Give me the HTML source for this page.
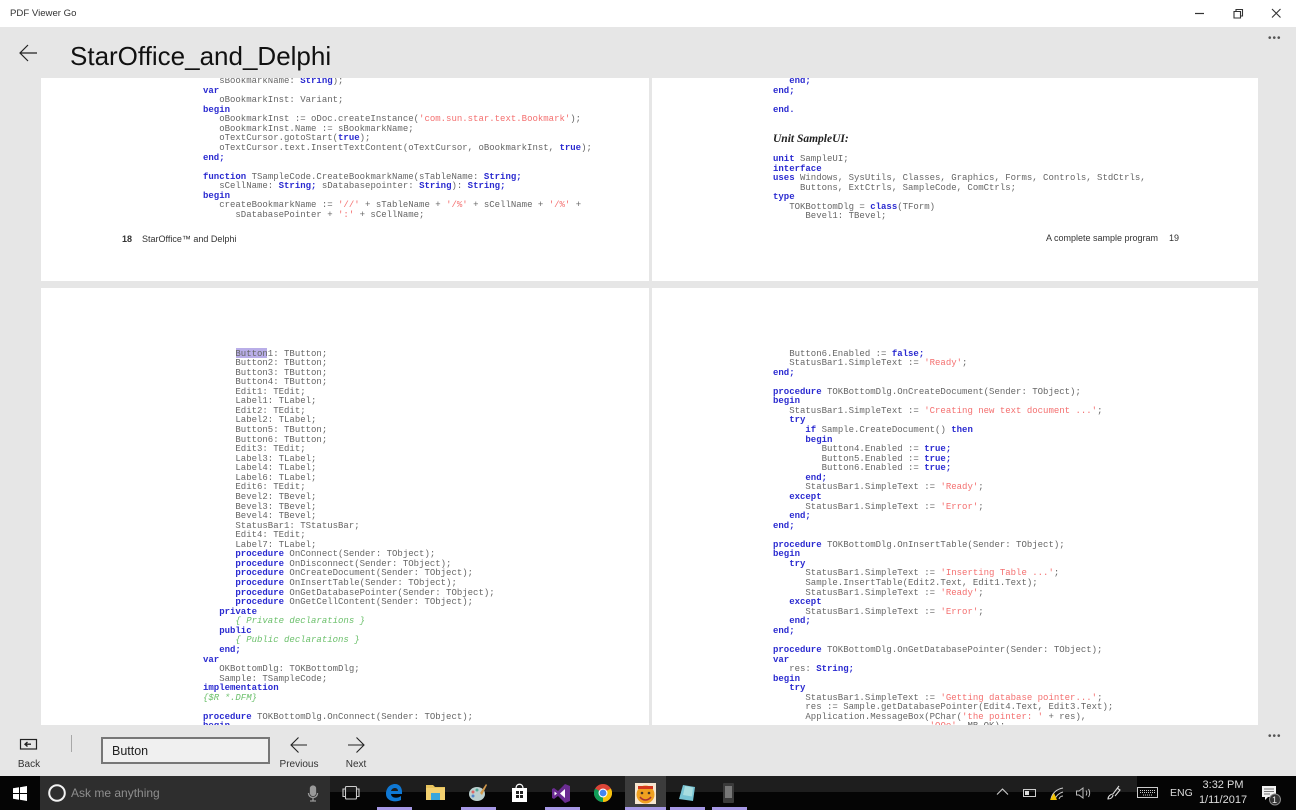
<!DOCTYPE html>
<html><head><meta charset="utf-8"><title>PDF Viewer Go</title>
<style>
html,body{margin:0;padding:0;width:1296px;height:810px;overflow:hidden;background:#e6e6e6;font-family:"Liberation Sans",sans-serif}
div,pre,svg,span.a{position:absolute}
.pg{background:#fff;overflow:hidden}
pre{margin:0;font:9px/9.56px "Liberation Mono",monospace;color:#666;filter:blur(.35px);white-space:pre}
pre b{color:#2a2ad0;font-weight:bold}
pre s{text-decoration:none;color:#f47070}
pre i{color:#6cc06c}
.lbl{font-size:10px;color:#333;text-align:center;width:60px}
.dot3{color:#555;font-size:10px;letter-spacing:1px}
.ind{position:absolute;top:807px;height:3px;background:#a698e6}
</style></head><body>
<div style="left:0;top:0;width:1296px;height:27px;background:#fff"></div>
<div style="left:10px;top:8px;font-size:9.6px;color:#333">PDF Viewer Go</div>
<svg style="left:1190px;top:5px" width="100" height="18" fill="none" stroke="#333">
<path d="M5 8.500H14" stroke-width="1.200"/>
<path d="M44 6.500h6.500v6.500H44zM46 6.500V4.500h6.500V11h-2" stroke-width="1.100"/>
<path d="M82 4l8.500 8.500M90.500 4L82 12.500" stroke-width="1.100"/>
</svg>
<div class="dot3" style="left:1268px;top:33px">&#8226;&#8226;&#8226;</div>

<svg style="left:18px;top:43px" width="22" height="20" fill="none" stroke="#222" stroke-width="1.200"><path d="M2 10H19M10 2L2 10l8 8"/></svg>
<div style="left:70px;top:40px;font-size:26px;line-height:32px;color:#111;white-space:nowrap">StarOffice_and_Delphi</div>

<div class="pg" style="left:41px;top:78px;width:608px;height:203px">
<pre style="left:162px;top:-3px;margin-top:2px"><span>   sBookmarkName: <b>String</b>);</span>
<b>var</b>
   oBookmarkInst: Variant;
<b>begin</b>
   oBookmarkInst := oDoc.createInstance(<s>'com.sun.star.text.Bookmark'</s>);
   oBookmarkInst.Name := sBookmarkName;
   oTextCursor.gotoStart(<b>true</b>);
   oTextCursor.text.InsertTextContent(oTextCursor, oBookmarkInst, <b>true</b>);
<b>end;</b>

<b>function</b> TSampleCode.CreateBookmarkName(sTableName: <b>String;</b>
   sCellName: <b>String;</b> sDatabasepointer: <b>String</b>): <b>String;</b>
<b>begin</b>
   createBookmarkName := <s>'//'</s> + sTableName + <s>'/%'</s> + sCellName + <s>'/%'</s> +
      sDatabasePointer + <s>':'</s> + sCellName;</pre>
<div style="left:81px;top:156px;font-size:9px;line-height:11px;font-weight:bold;color:#333">18</div>
<div style="left:101px;top:156px;font-size:9px;line-height:11px;color:#333;white-space:nowrap">StarOffice&#8482; and Delphi</div>
</div>

<div class="pg" style="left:652px;top:78px;width:606px;height:203px">
<pre style="left:121px;top:-1px">   <b>end;</b>
<b>end;</b>

<b>end.</b></pre>
<div style="left:121px;top:54px;font:italic bold 11.5px/14px 'Liberation Serif',serif;color:#222;white-space:nowrap">Unit SampleUI:</div>
<pre style="left:121px;top:77px"><b>unit</b> SampleUI;
<b>interface</b>
<b>uses</b> Windows, SysUtils, Classes, Graphics, Forms, Controls, StdCtrls,
     Buttons, ExtCtrls, SampleCode, ComCtrls;
<b>type</b>
   TOKBottomDlg = <b>class</b>(TForm)
      Bevel1: TBevel;</pre>
<div style="left:394px;top:155px;font-size:9px;line-height:11px;color:#333;white-space:nowrap">A complete sample program</div>
<div style="left:517px;top:155px;font-size:9px;line-height:11px;color:#333">19</div>
</div>

<div class="pg" style="left:41px;top:288px;width:608px;height:437px">
<div style="left:195px;top:60px;width:31px;height:10px;background:#b9aee8"></div>
<pre style="left:162px;top:61.500px">      Button1: TButton;
      Button2: TButton;
      Button3: TButton;
      Button4: TButton;
      Edit1: TEdit;
      Label1: TLabel;
      Edit2: TEdit;
      Label2: TLabel;
      Button5: TButton;
      Button6: TButton;
      Edit3: TEdit;
      Label3: TLabel;
      Label4: TLabel;
      Label6: TLabel;
      Edit6: TEdit;
      Bevel2: TBevel;
      Bevel3: TBevel;
      Bevel4: TBevel;
      StatusBar1: TStatusBar;
      Edit4: TEdit;
      Label7: TLabel;
      <b>procedure</b> OnConnect(Sender: TObject);
      <b>procedure</b> OnDisconnect(Sender: TObject);
      <b>procedure</b> OnCreateDocument(Sender: TObject);
      <b>procedure</b> OnInsertTable(Sender: TObject);
      <b>procedure</b> OnGetDatabasePointer(Sender: TObject);
      <b>procedure</b> OnGetCellContent(Sender: TObject);
   <b>private</b>
      <i>{ Private declarations }</i>
   <b>public</b>
      <i>{ Public declarations }</i>
   <b>end;</b>
<b>var</b>
   OKBottomDlg: TOKBottomDlg;
   Sample: TSampleCode;
<b>implementation</b>
<i>{$R *.DFM}</i>

<b>procedure</b> TOKBottomDlg.OnConnect(Sender: TObject);
<b>begin</b></pre>
</div>

<div class="pg" style="left:652px;top:288px;width:606px;height:437px">
<pre style="left:121px;top:61.500px">   Button6.Enabled := <b>false;</b>
   StatusBar1.SimpleText := <s>'Ready'</s>;
<b>end;</b>

<b>procedure</b> TOKBottomDlg.OnCreateDocument(Sender: TObject);
<b>begin</b>
   StatusBar1.SimpleText := <s>'Creating new text document ...'</s>;
   <b>try</b>
      <b>if</b> Sample.CreateDocument() <b>then</b>
      <b>begin</b>
         Button4.Enabled := <b>true;</b>
         Button5.Enabled := <b>true;</b>
         Button6.Enabled := <b>true;</b>
      <b>end;</b>
      StatusBar1.SimpleText := <s>'Ready'</s>;
   <b>except</b>
      StatusBar1.SimpleText := <s>'Error'</s>;
   <b>end;</b>
<b>end;</b>

<b>procedure</b> TOKBottomDlg.OnInsertTable(Sender: TObject);
<b>begin</b>
   <b>try</b>
      StatusBar1.SimpleText := <s>'Inserting Table ...'</s>;
      Sample.InsertTable(Edit2.Text, Edit1.Text);
      StatusBar1.SimpleText := <s>'Ready'</s>;
   <b>except</b>
      StatusBar1.SimpleText := <s>'Error'</s>;
   <b>end;</b>
<b>end;</b>

<b>procedure</b> TOKBottomDlg.OnGetDatabasePointer(Sender: TObject);
<b>var</b>
   res: <b>String;</b>
<b>begin</b>
   <b>try</b>
      StatusBar1.SimpleText := <s>'Getting database pointer...'</s>;
      res := Sample.getDatabasePointer(Edit4.Text, Edit3.Text);
      Application.MessageBox(PChar(<s>'the pointer: '</s> + res),
                             <s>'OOo'</s>, MB_OK);</pre>
</div>

<svg style="left:19px;top:738px" width="20" height="14" fill="none" stroke="#222" stroke-width="1.200"><rect x="1.500" y="1.500" width="16" height="9.500"/><path d="M12 6.200H6M8.500 4L6 6.200l2.500 2.300" stroke-width="1.400"/></svg>
<div class="lbl" style="left:-1px;top:759px">Back</div>
<div style="left:71px;top:735px;width:1px;height:17px;background:#a8a8a8"></div>
<div style="left:101px;top:737px;width:165px;height:23px;border:2px solid #777;background:#f0f0f0;font-size:12.500px;line-height:24px;color:#222;text-indent:9px">Button</div>
<svg style="left:289px;top:736px" width="20" height="18" fill="none" stroke="#222" stroke-width="1.100"><path d="M2 9H18M9.500 1.500L2 9l7.500 7.500"/></svg>
<div class="lbl" style="left:269px;top:759px">Previous</div>
<svg style="left:346px;top:736px" width="20" height="18" fill="none" stroke="#222" stroke-width="1.100"><path d="M2 9H18M10.500 1.500L18 9l-7.500 7.500"/></svg>
<div class="lbl" style="left:326px;top:759px">Next</div>
<div class="dot3" style="left:1268px;top:731px">&#8226;&#8226;&#8226;</div>

<div style="left:0;top:776px;width:1296px;height:34px;background:#050505"></div>
<div style="left:330px;top:776px;width:807px;height:16px;background:#1e1e1e"></div>
<div style="left:40px;top:776px;width:290px;height:34px;background:#2e2e2e"></div>
<svg style="left:13px;top:786px" width="15" height="15" fill="#fff"><path d="M0 2.200L6 1.300V7H0zM7 1.200L14 0V7H7zM0 8H6V13.700L0 12.800zM7 8H14V15L7 13.800z"/></svg>
<svg style="left:47px;top:783px" width="20" height="20" fill="none"><circle cx="10" cy="10" r="7.800" stroke="#f2f2f2" stroke-width="2"/></svg>
<div style="left:71px;top:785px;font-size:12px;line-height:17px;color:#8e8e8e;white-space:nowrap">Ask me anything</div>
<svg style="left:306px;top:785px" width="14" height="17" fill="none" stroke="#999" stroke-width="1.300"><rect x="4.500" y="1" width="5" height="9.500" rx="2.500" fill="#999"/><path d="M2.500 8c0 6 9 6 9 0M7 12.500V16M4 16h6"/></svg>
<svg style="left:342px;top:785px" width="18" height="16" fill="none" stroke="#ccc" stroke-width="1.100"><rect x="3.500" y="1.500" width="11" height="12.500" rx="1"/><path d="M3.500 4H1v7.500h2.500M14.500 4H17v7.500h-2.500"/></svg>

<div style="left:625px;top:776px;width:41px;height:34px;background:#3c3c3c"></div>
<div class="ind" style="left:377px;width:35px"></div>
<div class="ind" style="left:461px;width:35px"></div>
<div class="ind" style="left:545px;width:35px"></div>
<div class="ind" style="left:625px;width:41px"></div>
<div class="ind" style="left:670px;width:35px"></div>
<div class="ind" style="left:712px;width:35px"></div>

<svg style="left:385px;top:783px" width="18" height="20"><path d="M1 11C1 4 6 1 10 1c5 0 7.500 4 7 10H6c.3 4 6 5 10 2v4c-6 3-15 1-15-6zM6 8h7c0-4-6-4-7 0z" fill="#0f78d4"/></svg>
<svg style="left:426px;top:784px" width="20" height="17"><path d="M0 1h7l2 2h10v2H0z" fill="#e7c35c"/><path d="M0 4h19v12H0z" fill="#f2d06f"/><path d="M5 9h9v7H5z" fill="#37a6dc"/></svg>
<svg style="left:468px;top:783px" width="20" height="20"><ellipse cx="9" cy="11" rx="8" ry="7" fill="#bcd0cf"/><circle cx="5" cy="9" r="1.500" fill="#d66"/><circle cx="9" cy="7" r="1.500" fill="#5a9"/><circle cx="5" cy="13" r="1.500" fill="#58c"/><path d="M12 10L18 1l1 1-5 10z" fill="#d2994c"/></svg>
<svg style="left:511px;top:783px" width="17" height="20"><path d="M1 5H16V19H1z" fill="#fff"/><path d="M5 5C5 0 12 0 12 5" fill="none" stroke="#fff" stroke-width="1.200"/><path d="M5 8h3v3H5zM9 8h3v3H9zM5 12h3v3H5zM9 12h3v3H9z" fill="#222"/></svg>
<svg style="left:552px;top:784px" width="18" height="19"><path d="M13 0L18 2V17L13 19 6 12 2 15 0 14V5L2 4l4 3z" fill="#6a2c91"/><path d="M13 5V14L8 9.500zM2.500 7.500L5 9.500 2.500 11.500z" fill="#fff"/></svg>
<svg style="left:594px;top:784px" width="18" height="18" viewBox="0 0 18 18"><circle cx="9" cy="9" r="9" fill="#db4437"/><path d="M9 9L1.200 4.500A9 9 0 0 0 9 18z" fill="#0f9d58"/><path d="M9 9L9 18A9 9 0 0 0 16.800 4.500z" fill="#f4c20d"/><circle cx="9" cy="9" r="4.500" fill="#fff"/><circle cx="9" cy="9" r="3.400" fill="#4285f4"/></svg>
<div style="left:635px;top:783px;width:21px;height:21px;background:#f6e6d0"></div>
<svg style="left:635px;top:783px" width="21" height="21"><circle cx="10.500" cy="11.500" r="9" fill="#f0a020"/><circle cx="7" cy="10" r="1.300" fill="#432"/><circle cx="14" cy="10" r="1.300" fill="#432"/><path d="M5 14c3 4 8 4 11 0" fill="none" stroke="#a33" stroke-width="1.500"/><path d="M3 3h15v3H3z" fill="#d3361c"/></svg>
<svg style="left:677px;top:784px" width="20" height="19"><path d="M6 1L18 3 16 17 2 15z" fill="#78c4d4"/><path d="M8 2l8 1.500-1 9L6 11z" fill="#a8dde0"/></svg>
<svg style="left:722px;top:783px" width="13" height="20"><rect x="1" y="0" width="11" height="20" rx="1" fill="#3a3a3a"/><rect x="3" y="3" width="7" height="12" fill="#777"/></svg>

<svg style="left:996px;top:787px" width="14" height="9" fill="none" stroke="#ccc" stroke-width="1.100"><path d="M1 7.500L6.500 2 12 7.500"/></svg>
<svg style="left:1023px;top:789px" width="14" height="9"><rect x=".5" y=".5" width="12" height="7" fill="none" stroke="#ccc"/><rect x="2" y="2" width="4" height="4" fill="#ddd"/></svg>
<svg style="left:1049px;top:787px" width="16" height="14" fill="none" stroke="#ccc"><path d="M2 12C3 6 8 2 14 1M6 12C7 9 10 6 14 5M10 12c.5-1.500 2-3 4-3"/><path d="M1 13L5 6l3 7z" fill="#f2c200" stroke="none"/></svg>
<svg style="left:1075px;top:786px" width="16" height="14" fill="none" stroke="#bbb"><path d="M1.500 5H4L8 2V12L4 9H1.500zM11 4.500c1 1.500 1 3.500 0 5M13.500 3c1.500 2.500 1.500 5.500 0 8"/></svg>
<svg style="left:1106px;top:785px" width="16" height="16" fill="none" stroke="#ddd" stroke-width="1.100"><path d="M13 1L7 9c-2 0-5 2-5 5 3 0 5-2 5-4M11 3l3 2-5 6"/></svg>
<svg style="left:1137px;top:787px" width="22" height="12" fill="none" stroke="#ccc"><rect x=".5" y=".5" width="20" height="10"/><path d="M3 3.500h15M3 5.500h15M6 8h9" stroke-dasharray="1 1"/></svg>
<div style="left:1170px;top:786px;font-size:10.500px;line-height:14px;color:#ddd">ENG</div>
<div style="left:1188px;top:778px;width:70px;font-size:11px;line-height:15px;color:#ddd;text-align:center">3:32 PM<br>1/11/2017</div>
<svg style="left:1261px;top:785px" width="20" height="21"><path d="M1 1H15V12H7L4 15V12H1z" fill="#f2f2f2"/><path d="M3 4h10M3 6.500h10M3 9h6" stroke="#777"/><circle cx="14" cy="14.500" r="5.500" fill="#333" stroke="#888"/></svg>
<div style="left:1272px;top:794px;font-size:9px;line-height:12px;color:#eee">1</div>
</body></html>
